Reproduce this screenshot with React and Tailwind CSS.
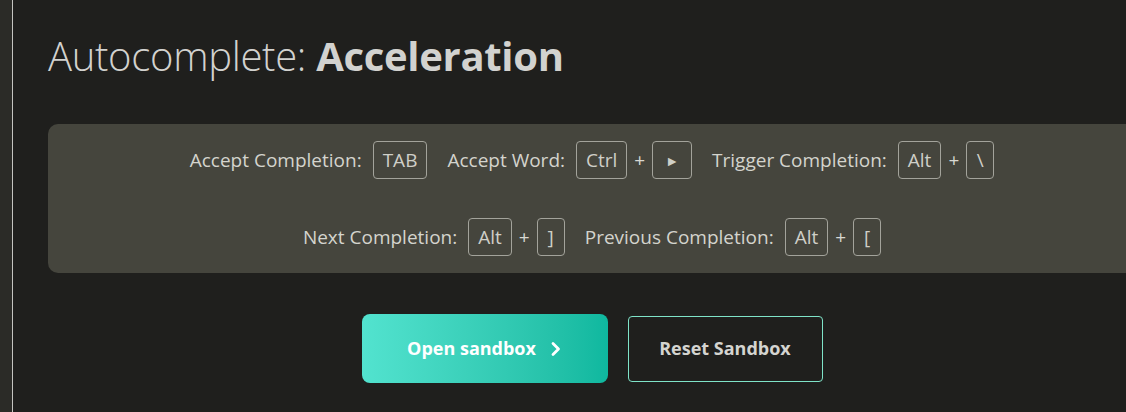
import React from 'react';

const font = { fontFamily: '"Open Sans", "Noto Sans", sans-serif' };

// Keyboard key chip
const Key = ({ children }) => (
  <span className="inline-flex h-[38px] min-w-[28px] items-center justify-center rounded-[4px] border border-[#a3a39b] px-[9px] text-[#cfcfc8]">
    {children}
  </span>
);

const Plus = () => <span className="mx-[7px] text-[#d8d8d2]">+</span>;

const Shortcut = ({ label, keys }) => (
  <div className="flex items-center">
    <span className="mr-[11px] text-[#d4d4cd]">{label}</span>
    {keys.map((k, i) => (
      <React.Fragment key={i}>
        {i > 0 && <Plus />}
        <Key>{k}</Key>
      </React.Fragment>
    ))}
  </div>
);

export default function App() {
  return (
    <div className="flex h-[412px] w-[1126px] overflow-hidden bg-[#1f1f1d]" style={font}>
      {/* left gutter */}
      <div className="w-[12px] shrink-0 bg-[#2b2b27]" />
      <div className="w-px shrink-0 bg-[#c4c4c0]" />

      <main className="w-[1123px] shrink-0 pl-[35px] pt-[28px]">
        <h1 className="text-[40px] leading-[56px] tracking-[-0.3px] text-[#d2d2cf]">
          <span className="font-light">Autocomplete: </span>
          <span className="font-bold">Acceleration</span>
        </h1>

        <div className="mt-[40px] flex h-[149px] flex-col items-center justify-center gap-[39px] rounded-[10px] bg-[#45453d] text-[19px]">
          <div className="flex items-center gap-[20px]">
            <Shortcut label="Accept Completion:" keys={['TAB']} />
            <Shortcut label="Accept Word:" keys={['Ctrl', <span className="px-[3px] text-[14px]">►</span>]} />
            <Shortcut label="Trigger Completion:" keys={['Alt', '\\']} />
          </div>
          <div className="flex items-center gap-[20px]">
            <Shortcut label="Next Completion:" keys={['Alt', ']']} />
            <Shortcut label="Previous Completion:" keys={['Alt', '[']} />
          </div>
        </div>

        <div className="mt-[41px] flex items-center justify-center gap-[20px]">
          <button className="flex h-[69px] w-[246px] items-center justify-center gap-[14px] rounded-[8px] bg-gradient-to-r from-[#52e3cf] to-[#0eb89f] text-[18px] font-bold text-white">
            Open sandbox
            <svg width="12" height="16" viewBox="0 0 12 16" fill="none">
              <path d="M3 2.5 L8.5 8 L3 13.5" stroke="white" strokeWidth="2.8" strokeLinecap="round" strokeLinejoin="round" />
            </svg>
          </button>
          <button className="flex h-[66px] w-[195px] items-center justify-center rounded-[4px] border border-[#7fe3c8] text-[18px] font-bold text-[#d4d4d0]">
            Reset Sandbox
          </button>
        </div>
      </main>
    </div>
  );
}
